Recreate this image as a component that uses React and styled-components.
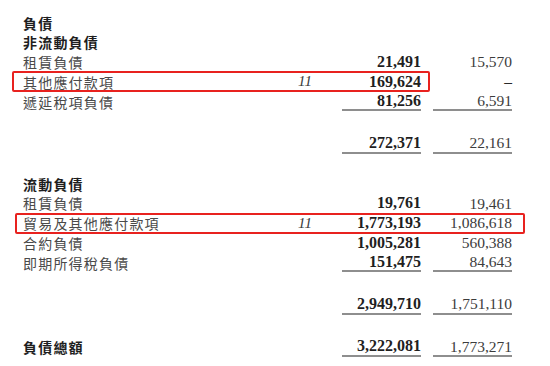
import React from 'react'
import styled, { createGlobalStyle } from 'styled-components'

const GlobalStyle = createGlobalStyle`
  html, body {
    margin: 0;
    padding: 0;
    background: #ffffff;
  }
  * {
    box-sizing: border-box;
  }
`

const Sheet = styled.div`
  width: 550px;
  height: 366px;
  padding: 12.65px 0 0 23px;
  background: #fff;
  overflow: hidden;
`

const Row = styled.div`
  position: relative;
  display: grid;
  grid-template-columns: 255px 40px 79px 79px;
  column-gap: 12px;
  width: 489px;
  height: 19.75px;
  margin-top: ${p => p.$space || 0}px;

  ${p => p.$box && `
    &::after {
      content: '';
      position: absolute;
      top: ${p.$box.top}px;
      bottom: ${p.$box.bottom}px;
      left: ${p.$box.left}px;
      right: ${p.$box.right}px;
      border: 2px solid #e8221f;
      border-radius: 2px;
      pointer-events: none;
    }
  `}
`

const Label = styled.div`
  display: flex;
  align-items: center;
  font-family: "Noto Sans CJK TC", "Noto Sans CJK SC", sans-serif;
  font-size: 14px;
  line-height: 1;
  letter-spacing: 1.2px;
  font-weight: ${p => (p.$bold ? 700 : 400)};
  color: ${p => (p.$bold ? '#1e1e1e' : '#4a4a4a')};
  white-space: nowrap;
`

const Note = styled.div`
  display: flex;
  align-items: center;
  padding-left: 8px;
  font-family: "Liberation Serif", serif;
  font-style: italic;
  font-size: 15px;
  line-height: 1;
  color: #3a3a3a;
`

const Amount = styled.div`
  display: flex;
  align-items: center;
  justify-content: flex-end;
  font-family: "Liberation Serif", serif;
  font-size: ${p => (p.$current ? 16 : 15.5)}px;
  font-weight: ${p => (p.$current ? 700 : 400)};
  color: ${p => (p.$current ? '#1f1f1f' : '#3c3c3c')};
  line-height: 1;
  border-bottom: ${p => (p.$rule ? '2px solid #8e8e8e' : '0')};
`

const Dash = styled.span`
  font-weight: 700;
  color: #2a2a2a;
`

const Line = ({ label, bold, note, now, prev, rule, space, box }) => (
  <Row $space={space} $box={box}>
    <Label $bold={bold}>{label}</Label>
    <Note>{note}</Note>
    <Amount $current $rule={rule}>{now}</Amount>
    <Amount $rule={rule}>{prev}</Amount>
  </Row>
)

export default function App() {
  return (
    <>
      <GlobalStyle />
      <Sheet>
        <Line label="負債" bold />
        <Line label="非流動負債" bold />
        <Line label="租賃負債" now="21,491" prev="15,570" />
        <Line
          label="其他應付款項"
          note="11"
          now="169,624"
          prev={<Dash>–</Dash>}
          box={{ top: -1, bottom: -0.5, left: -11, right: 82 }}
        />
        <Line label="遞延稅項負債" now="81,256" prev="6,591" rule />
        <Line now="272,371" prev="22,161" rule space={22.8} />

        <Line label="流動負債" bold space={19.7} />
        <Line label="租賃負債" now="19,761" prev="19,461" />
        <Line
          label="貿易及其他應付款項"
          note="11"
          now="1,773,193"
          prev="1,086,618"
          box={{ top: 0, bottom: -1, left: -8, right: -13 }}
        />
        <Line label="合約負債" now="1,005,281" prev="560,388" />
        <Line label="即期所得稅負債" now="151,475" prev="84,643" rule />
        <Line now="2,949,710" prev="1,751,110" rule space={22.7} />

        <Line label="負債總額" bold now="3,222,081" prev="1,773,271" rule space={22.7} />
      </Sheet>
    </>
  )
}
